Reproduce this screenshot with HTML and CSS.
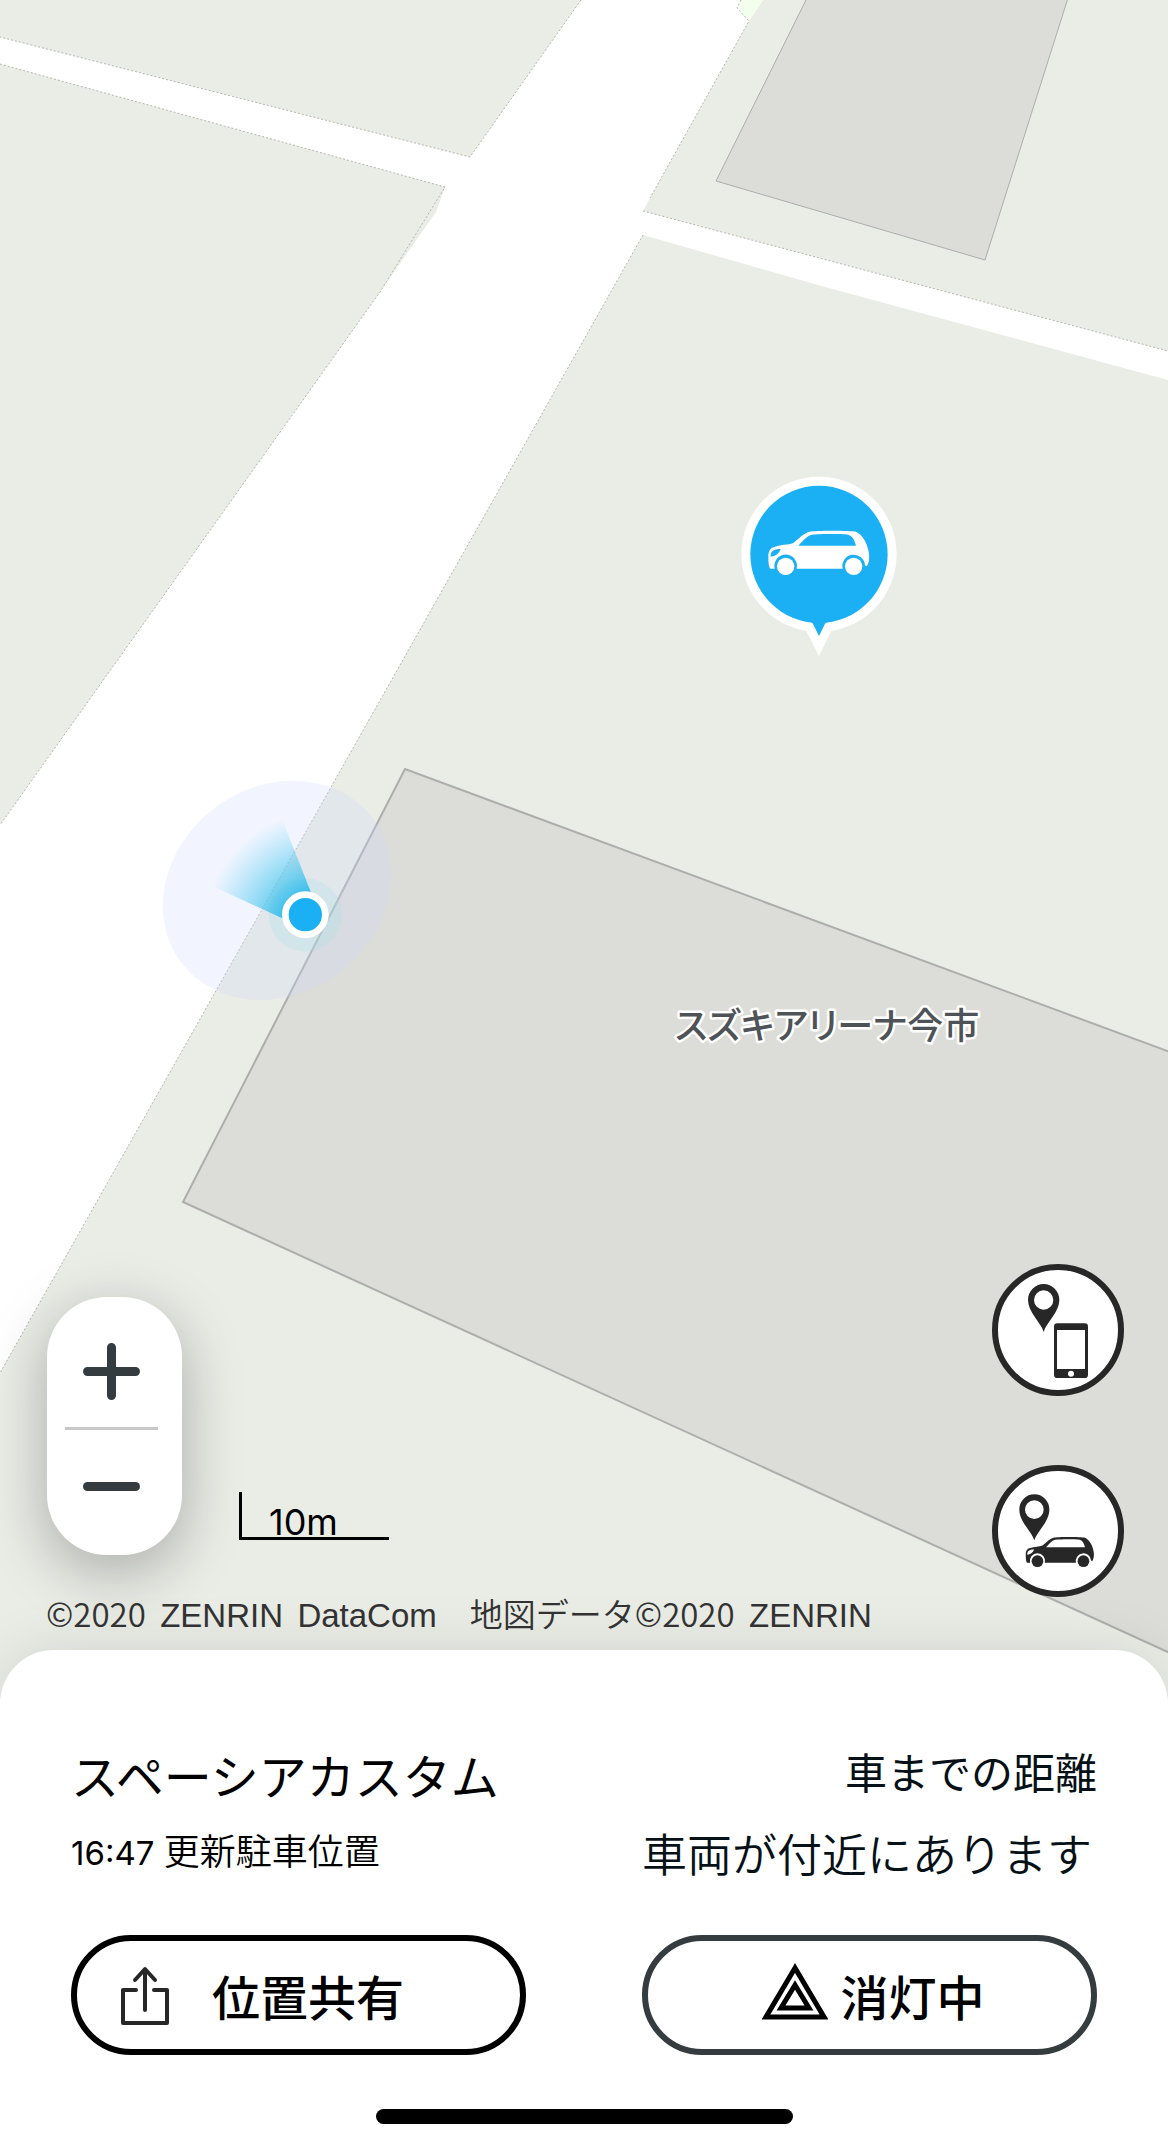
FILE: index.html
```html
<!DOCTYPE html>
<html lang="ja">
<head>
<meta charset="utf-8">
<meta name="viewport" content="width=device-width, initial-scale=1">
<title>駐車位置</title>
<link rel="stylesheet" href="styles.css">
</head>
<body>
<main class="map">
  <svg class="map-canvas" viewBox="0 0 1168 1704" preserveAspectRatio="xMidYMid slice" role="img" aria-label="地図">
    <defs>
      <radialGradient id="beam" gradientUnits="userSpaceOnUse" cx="530" cy="525" r="375">
        <stop offset="0.3" stop-color="#22b4ec"/>
        <stop offset="0.55" stop-color="#4cc7ee" stop-opacity="0.7"/>
        <stop offset="1" stop-color="#6ad2f5" stop-opacity="0"/>
      </radialGradient>
      <symbol id="car" viewBox="0 0 600 630">
        <path fill="currentColor" fill-rule="evenodd" d="M151 326 Q145 322 145 290 C145 274 150 263 165 260 C185 253 202 256 220 249 C235 237 250 220 268 215 C285 211 390 211 408 215 C425 223 441 245 446 275 C450 297 446 310 440 319 L435 316 A34 34 0 1 0 368 326 L230 326 A34 34 0 1 0 164 326 Z M235 257 L408 257 C404 241 398 228 385 224 C365 221 300 221 275 224 C260 228 250 241 235 257 Z M152 290 C151 275 160 267 182 267 C178 278 170 288 152 290 Z"/>
        <circle fill="currentColor" cx="197" cy="319" r="26"/>
        <circle fill="currentColor" cx="401" cy="319" r="26"/>
      </symbol>
    </defs>

    <!-- city blocks -->
    <g class="block">
      <path d="M0 0H581L470 157L0 37Z"/>
      <path d="M0 64L445 187L436 212L380 292L0 825Z"/>
      <path d="M763 0H1168V351L643 211L650 198L749 21Z"/>
      <path d="M643 235L825 287L1168 380V1704H0V1373Z"/>
    </g>
    <path class="park" d="M741 0H763L749 21L737 8Z"/>
    <path class="kerb" d="M581 0L470 157L0 37M0 64L445 187L380 292L0 825M741 0L737 8L749 21L650 198M643 211L1168 351M643 235L0 1373"/>

    <!-- buildings -->
    <path class="building" d="M807 -2L716 181L985 260L1068 -2Z"/>
    <path class="building building-near" d="M1170 1052L405 769L183 1202L1170 1653Z"/>
    <text class="place" x="675" y="1039">スズキアリーナ今市</text>

    <!-- current position -->
    <g transform="translate(150 760) scale(0.3333)">
      <ellipse cx="381" cy="391" rx="360" ry="310" transform="rotate(-37 381 391)" fill="#cbd9ff" fill-opacity="0.25"/>
      <circle cx="466" cy="465" r="110" fill="#a5e1e6" fill-opacity="0.28"/>
      <path d="M395 174Q252 236 175 373L410 481L466 465L486 405Z" fill="url(#beam)"/>
      <circle cx="466" cy="464" r="60" fill="#1ab0f3" stroke="#fff" stroke-width="20"/>
    </g>

    <!-- parked car -->
    <g transform="translate(720 460) scale(0.3333)" class="pin">
      <circle cx="297" cy="283" r="233"/>
      <path d="M256 508L297 588L336 508Z"/>
      <circle class="pin-face" cx="297" cy="283" r="206"/>
      <path class="pin-face" d="M273 484L278 490L297 528L316 490L321 484Z"/>
      <use href="#car" width="600" height="630"/>
    </g>
  </svg>

  <div class="controls">
    <div class="tools">
      <div class="zoom">
        <button class="zoom-button" type="button" aria-label="拡大">
          <svg class="zoom-icon" viewBox="0 0 57 57"><path d="M28.500 4.500V52.500M4.500 28.500H52.500"/></svg>
        </button>
        <button class="zoom-button" type="button" aria-label="縮小">
          <svg class="zoom-icon" viewBox="0 0 57 57"><path d="M4.500 28.500H52.500"/></svg>
        </button>
      </div>
      <div class="scale">10m</div>
    </div>
    <div class="locate">
      <button class="round" type="button" aria-label="スマートフォンの位置">
        <svg viewBox="18 18 360 360">
          <path fill-rule="evenodd" d="M155 204C147 175 108 145 108 108A47 48 0 0 1 202 108C202 145 163 175 155 204ZM155 79A29 29 0 1 0 155 137A29 29 0 1 0 155 79Z"/>
          <path fill-rule="evenodd" d="M196 178H278Q288 178 288 188V332Q288 342 278 342H196Q186 342 186 332V188Q186 178 196 178ZM195 198V315H279V198ZM237 320A9 9 0 1 0 237 338A9 9 0 1 0 237 320Z"/>
        </svg>
      </button>
      <button class="round" type="button" aria-label="車の位置">
        <svg viewBox="18 18 360 360">
          <path fill-rule="evenodd" d="M127 226C119 199 82 170 82 134A45 46 0 0 1 172 134C172 170 135 199 127 226ZM127 106A28 28 0 1 0 127 162A28 28 0 1 0 127 106Z"/>
          <use href="#car" x="3" y="73" width="406" height="426"/>
        </svg>
      </button>
    </div>
  </div>
  <p class="copyright">©2020 <span class="latin">ZENRIN</span> <span class="latin">DataCom</span>　地図データ©2020 <span class="latin">ZENRIN</span></p>
</main>

<section class="sheet">
  <div class="info">
    <div class="car-info">
      <h1 class="car-name">スペーシアカスタム</h1>
      <p class="updated"><time class="time">16:47 </time>更新駐車位置</p>
    </div>
    <div class="distance">
      <h2 class="distance-title">車までの距離</h2>
      <p class="distance-text">車両が付近にあります</p>
    </div>
    <button class="action action-share" type="button">
      <svg class="share-icon" viewBox="0 0 50 60"><path d="M16 25H3V58H47V25H34M25 45V5M15 15L25 4L35 15"/></svg>
      位置共有
    </button>
    <button class="action action-lamp" type="button">
      <svg class="lamp-icon" viewBox="0 0 66 58"><path d="M33 6L4 55H62ZM33 23L19 46H47Z"/></svg>
      消灯中
    </button>
  </div>
  <div class="home-bar"></div>
</section>
</body>
</html>
```

FILE: styles.css
```css
* {
  box-sizing: border-box;
}

body {
  margin: 0;
  min-height: 100vh;
  display: flex;
  flex-direction: column;
  background: #fff;
  color: #000;
  font-family: Inter, "Noto Sans CJK JP", sans-serif;
}

h1,
h2,
p {
  margin: 0;
  font-weight: 400;
}

button {
  padding: 0;
  border: 0;
  background: none;
  color: inherit;
  font: inherit;
}

svg {
  display: block;
}

/* Map */

.map {
  position: relative;
  flex: 1;
  display: flex;
  flex-direction: column;
  justify-content: flex-end;
  padding: 0 44px 72px 46px;
  background: #fff;
}

.map-canvas {
  position: absolute;
  inset: 0;
  width: 100%;
  height: 100%;
}

.block {
  fill: #eaece6;
}

.park {
  fill: #f2ffec;
}

.kerb {
  fill: none;
  stroke: #b4b6b0;
  stroke-width: 1;
  stroke-dasharray: 2 2;
}

.building {
  fill: #dcddd8;
  stroke: #adaeac;
  stroke-width: 1;
}

.building-near {
  stroke-width: 2;
}

.place {
  font-family: "Noto Sans CJK JP", sans-serif;
  font-size: 36px;
  font-weight: 500;
  font-feature-settings: "palt";
  fill: #4e5358;
  stroke: #fff;
  stroke-width: 5px;
  stroke-linejoin: round;
  paint-order: stroke;
}

.pin {
  fill: #fff;
  color: #fff;
}

.pin-face {
  fill: #1ab0f3;
}

.controls {
  position: relative;
  display: flex;
  justify-content: space-between;
  align-items: flex-end;
}

.tools {
  display: flex;
  align-items: flex-end;
  gap: 57px;
  padding: 0 0 42px 1px;
}

.zoom {
  display: flex;
  flex-direction: column;
  width: 135px;
  padding: 18px 24px 13px 18px;
  border-radius: 60px;
  background: #fff;
  box-shadow: 0 16px 60px rgba(0, 0, 0, 0.28);
}

.zoom-button {
  display: flex;
  align-items: center;
  justify-content: center;
  height: 112px;
}

.zoom-button + .zoom-button {
  height: 115px;
  border-top: 3px solid #c8c8c8;
}

.zoom-icon {
  width: 57px;
  height: 57px;
  fill: none;
  stroke: #343c3f;
  stroke-width: 9;
  stroke-linecap: round;
}

.scale {
  width: 150px;
  height: 48px;
  margin-bottom: 15px;
  padding-left: 27px;
  border-left: 3px solid #000;
  border-bottom: 3px solid #000;
  font-size: 36px;
  line-height: 60px;
}

.locate {
  display: grid;
  gap: 69px;
}

.round {
  width: 132px;
  height: 132px;
  border: 6px solid #272727;
  border-radius: 50%;
  background: #fff;
  color: #272727;
  fill: #272727;
}

.copyright {
  position: relative;
  color: #333;
  font-family: "Noto Sans CJK JP", sans-serif;
  font-size: 33px;
  font-weight: 350;
  line-height: 32px;
}

.latin {
  margin-left: 7px;
  font-family: "Liberation Sans", sans-serif;
}

/* Bottom sheet */

.sheet {
  position: relative;
  margin-top: -54px;
  padding: 94px 71px 23px;
  border-radius: 54px 54px 0 0;
  background: #fff;
  box-shadow: 0 0 60px rgba(0, 0, 0, 0.1);
}

.info {
  display: grid;
  grid-template-columns: 1fr 1fr;
  column-gap: 116px;
  row-gap: 45px;
}

.car-name {
  font-size: 48px;
  line-height: 68px;
}

.updated {
  padding-top: 6px;
  font-size: 36px;
  font-weight: 350;
  line-height: 68px;
}

.time {
  font-size: 33px;
  font-weight: 400;
  white-space: pre;
}

.distance-title {
  color: #061117;
  font-size: 42px;
  line-height: 60px;
  text-align: right;
}

.distance-text {
  padding-top: 18px;
  color: #061117;
  font-size: 45px;
  font-weight: 350;
  line-height: 68px;
}

.action {
  display: flex;
  align-items: center;
  height: 120px;
  border: 6px solid #000;
  border-radius: 60px;
  font-size: 48px;
  font-weight: 500;
}

.action-share {
  gap: 42px;
  padding-left: 43px;
}

.action-lamp {
  gap: 12px;
  justify-content: center;
  padding-left: 8px;
  border-color: #343c3f;
}

.share-icon {
  width: 50px;
  height: 60px;
  fill: none;
  stroke: #272727;
  stroke-width: 4;
  stroke-linecap: round;
  stroke-linejoin: round;
}

.lamp-icon {
  width: 66px;
  height: 58px;
  margin-bottom: 8px;
  fill: none;
  stroke: #000;
  stroke-width: 5;
}

.home-bar {
  width: 417px;
  height: 15px;
  margin: 54px auto 0;
  border-radius: 8px;
  background: #000;
}
```
